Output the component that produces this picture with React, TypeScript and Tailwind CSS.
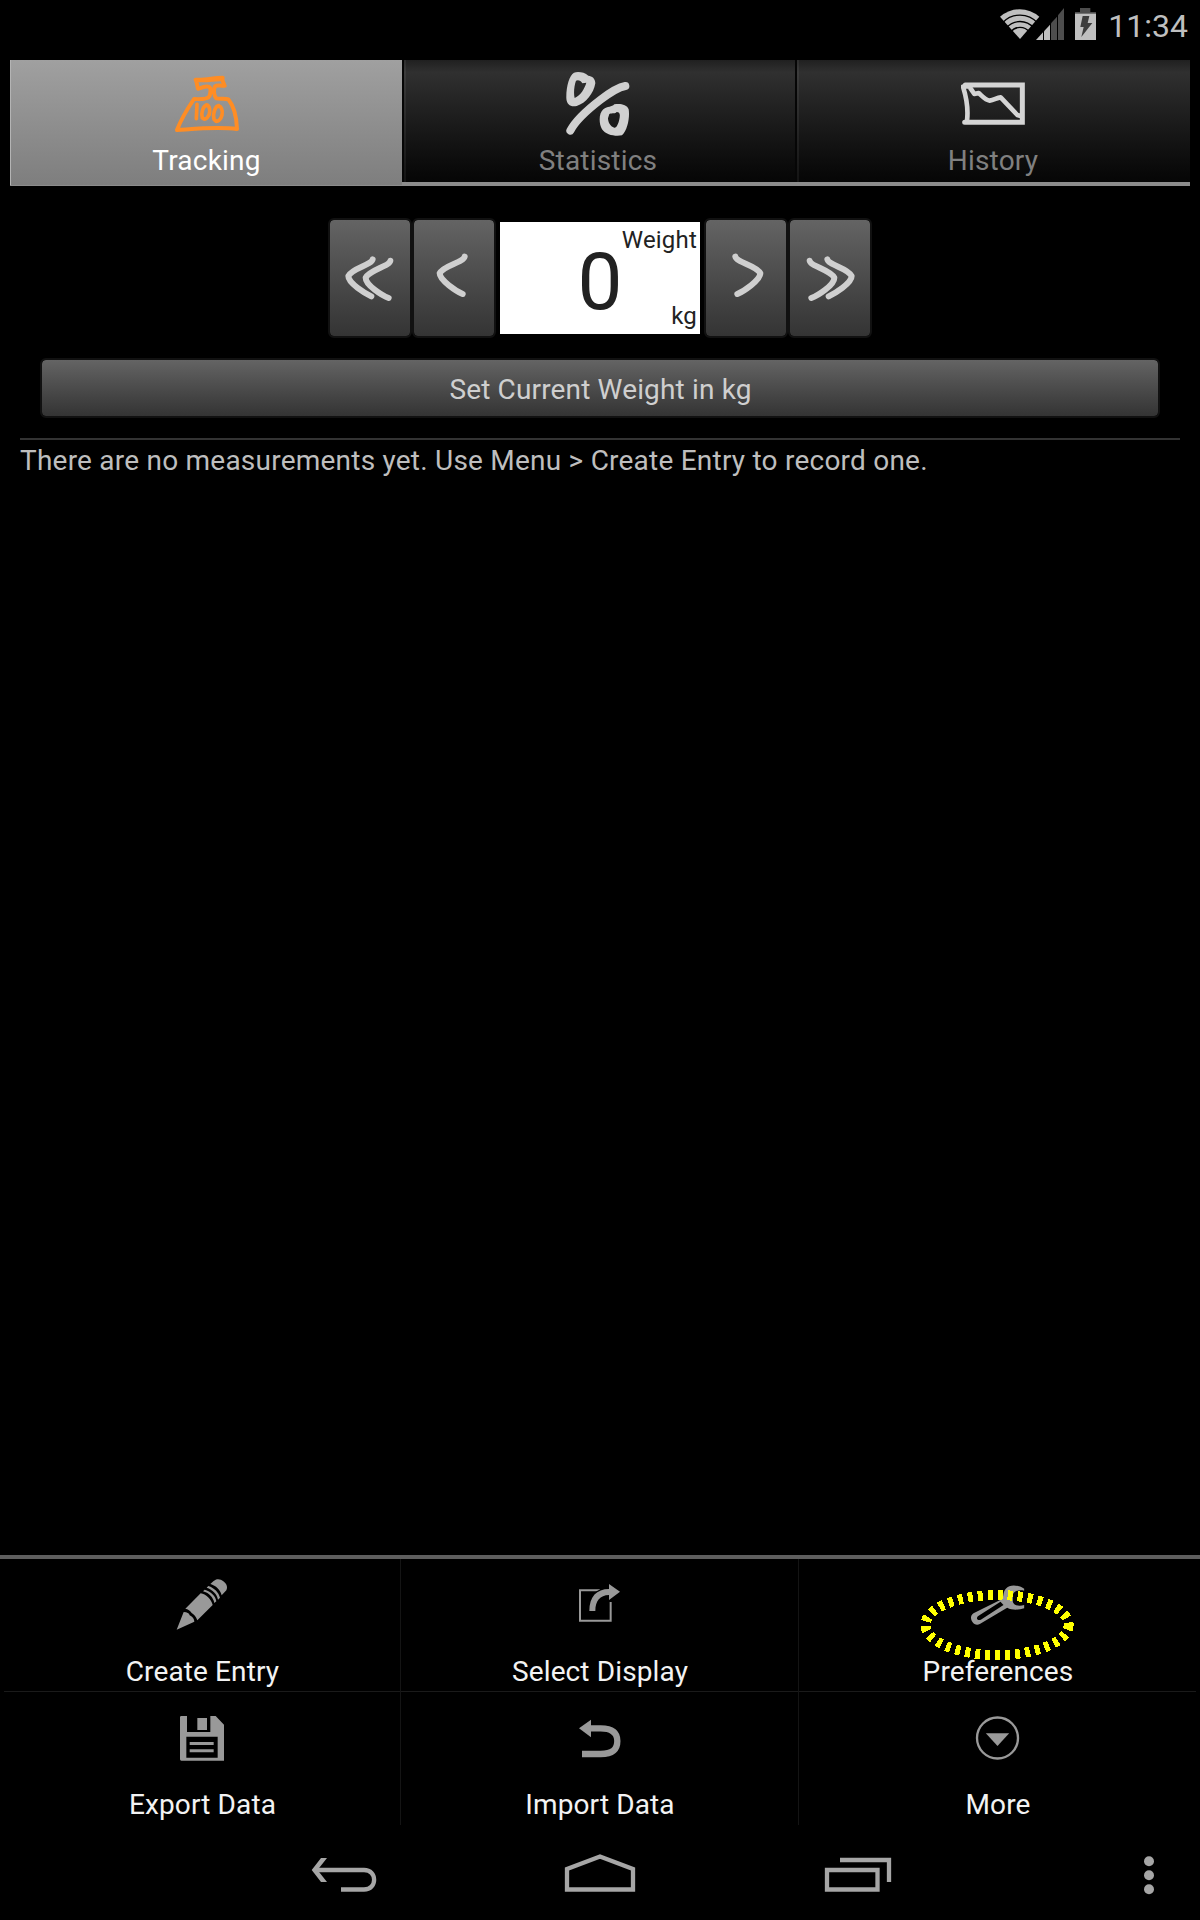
import React from "react";

function StatusIcons() {
  return (
    <svg className="h-[60px] w-[120px]" viewBox="60 0 360 180">
      <path d="M180 117 L120 50 A90 90 0 0 1 238 50 Z" fill="#bfbfbf" />
      <g fill="none" stroke="#000" strokeWidth="4">
        <path d="M127 69 A71 71 0 0 1 233 69" />
        <path d="M139 84 A53 53 0 0 1 221 84" />
        <path d="M152 96 A35 35 0 0 1 208 96" />
      </g>
      <g fill="#bfbfbf">
        <path d="M228 120 L249 97 V120 Z" />
        <path d="M252 94 L270 74 V120 H252 Z" />
      </g>
      <g fill="#4d4d4d">
        <path d="M273 70 L291 50 V120 H273 Z" />
        <path d="M294 46 L312 24 V120 H294 Z" />
      </g>
      <path d="M345 36 H360 V24 H391 V36 H408 V120 H345 Z" fill="#4d4d4d" />
      <path d="M345 41 H408 V120 H345 Z" fill="#bfbfbf" />
      <path d="M368 48 H388 L383 69 H397 L364 111 L371 81 H361 Z" fill="#3c3c3c" />
    </svg>
  );
}

function ScaleIcon() {
  return (
    <svg className="h-16 w-16 shrink-0" viewBox="522 66 192 192" fill="none" stroke="#ff8d24" strokeLinecap="round" strokeLinejoin="round">
      <path
        strokeWidth="12"
        d="M584 89 C608 92 640 83 665 83 L664 90 L671 107 C660 109 648 103 642 109 C637 120 638 136 646 145 C656 148 672 144 682 148 C697 167 707 203 708 237 C650 230 590 236 528 240 C536 219 558 178 579 147 C598 148 622 147 626 137 C630 121 630 112 622 110 C612 107 602 114 591 116 C588 106 588 97 584 89 Z"
      />
      <path d="M590 93 C615 97 640 90 660 91" strokeWidth="6" />
      <path strokeWidth="11" d="M588 163 L586 206 M618 166 C607 166 599 187 604 204 C614 213 625 199 626 186 C627 175 623 163 615 165 M653 167 C643 169 634 190 639 208 C649 221 660 209 663 195 C666 181 661 165 648 169" />
    </svg>
  );
}

function PercentIcon() {
  return (
    <svg className="h-16 w-16 shrink-0" viewBox="500 66 192 192" fill="#d0d0d0" fillRule="evenodd">
      <path fill="none" stroke="#d0d0d0" strokeLinecap="round" strokeWidth="24" d="M513 242 C528 213 566 178 604 149 C630 129 656 112 678 108" />
      <path d="M524 68 C510 75 500 110 501 145 C502 165 515 172 532 168 C560 160 583 130 588 100 C588 85 578 78 567 77 C555 66 535 64 524 68 Z M530 92 C536 88 545 92 549 100 L561 98 C556 115 545 135 526 144 C522 130 525 105 530 92 Z" />
      <path d="M645 163 C660 160 683 162 688 178 C692 200 685 240 668 256 C650 260 620 256 608 238 C598 220 598 190 612 178 C625 168 637 172 645 163 Z M630 192 C640 188 648 192 652 186 C664 186 662 198 660 208 C657 222 652 234 645 233 C632 230 626 215 626 205 Z" />
    </svg>
  );
}

function HistoryIcon() {
  return (
    <svg className="h-16 w-16 shrink-0" viewBox="543 66 192 192" fill="none" stroke="#d4d4d4" strokeWidth="15" strokeLinejoin="round" strokeLinecap="round">
      <path strokeLinejoin="miter" d="M556 105 H727 V217 H554" />
      <path strokeWidth="14" d="M549 110 C560 145 565 180 561 212 M553 108 L568 110 L583 132 L596 129 C607 139 617 151 629 152 C642 151 650 143 662 142 C681 162 698 180 712 195 L722 198" />
    </svg>
  );
}

function Tab({ label, className, children }: { label: string; className: string; children: React.ReactNode }) {
  return (
    <div className={className}>
      {children}
      <span className="mt-[5px] text-[28px] leading-[40px] whitespace-nowrap">{label}</span>
    </div>
  );
}

function StepButton({ kind }: { kind: "first" | "prev" | "next" | "last" }) {
  const flipped = kind === "next" || kind === "last";
  const double = kind === "first" || kind === "last";
  return (
    <button className="h-[120px] w-[84px] rounded-md border-2 border-[#111] bg-linear-to-b from-[#646464] to-[#343434] bg-clip-padding">
      <svg
        className={flipped ? "-m-0.5 h-[120px] w-[84px] -scale-x-100" : "-m-0.5 h-[120px] w-[84px]"}
        viewBox="0 0 252 360"
        fill="none"
        stroke="#cfcfcf"
        strokeWidth="18"
        strokeLinecap="round"
        strokeLinejoin="round"
      >
        {double ? (
          <>
            <path d="M134 124 C131 141 73 150 61 174 C61 196 112 226 130 235" />
            <path d="M187 128 C184 145 126 155 113 179 C113 202 164 233 182 240" />
          </>
        ) : (
          <path d="M158 116 C154 134 94 142 83 166 C83 187 134 220 152 228" />
        )}
      </svg>
    </button>
  );
}

const iconClass = "mt-2.5 h-[72px] w-[72px] shrink-0";

function PencilIcon() {
  return (
    <svg className={iconClass} viewBox="498 87 216 216" fill="#999">
      <path d="M530 269 L551 216 C562 217 567 219 569 226 C578 231 583 237 583 245 Z" />
      <path d="M556 206 L602 160 C617 162 635 179 638 195 L592 241 C588 230 582 223 575 219 C571 211 564 208 556 206 Z" />
      <path d="M609 154 L614 149 C632 154 647 168 649 184 L643 189 C640 172 626 158 609 154 Z" />
      <path d="M620 143 L625 138 C643 144 656 157 660 173 L654 179 C651 162 638 149 620 143 Z" />
      <path d="M631 132 L640 124 C650 114 662 117 670 124 C680 131 684 142 679 151 L665 166 C661 149 648 137 631 132 Z" />
    </svg>
  );
}

function SelectIcon() {
  return (
    <svg className={iconClass} viewBox="492 87 216 216">
      <path d="M600 151 H540 V242 H632 V186" fill="none" stroke="#999" strokeWidth="6" />
      <path d="M568 213 C568 170 590 147 627 147 V132 L660 155 L627 180 V165 C600 166 586 182 586 213 Z" fill="#999" stroke="#000" strokeWidth="8" paintOrder="stroke" />
    </svg>
  );
}

function WrenchIcon() {
  return (
    <svg className={iconClass} viewBox="484.5 87 216 216">
      <path
        fill="#999"
        fillRule="evenodd"
        d="M671 146 C652 134 628 132 616 146 C607 156 610 168 605 177 L519 220 C509 227 510 238 516 246 C521 254 530 256 538 252 L620 203 C635 211 655 210 671 205 V195 C655 200 640 196 637 186 V164 C640 153 655 149 671 152 Z M532 229 L600 185 L609 195 L541 239 C531 243 526 235 532 229 Z"
      />
    </svg>
  );
}

function SaveIcon() {
  return (
    <svg className={iconClass} viewBox="498 486 216 216" fill="#999">
      <path fillRule="evenodd" d="M544 528 H561 V576 H631 V528 H647 L672 554 V662 H544 Q540 662 540 658 V532 Q540 528 544 528 Z M559 590 V653 H653 V590 Z" />
      <path d="M592 534 H621 V570 H592 Z M569 606 H641 V615 H569 Z M569 628 H641 V637 H569 Z" />
    </svg>
  );
}

function ImportIcon() {
  return (
    <svg className={iconClass} viewBox="492 486 216 216">
      <path d="M573 565 H602 C634 565 652 577 652 603 C652 630 636 642 602 642 H546" fill="none" stroke="#999" strokeWidth="19" />
      <path d="M537 565 L573 539 V592 Z" fill="#999" />
    </svg>
  );
}

function MoreIcon() {
  return (
    <svg className={iconClass} viewBox="484.5 486 216 216">
      <circle cx="591" cy="594" r="61.5" fill="none" stroke="#999" strokeWidth="7" />
      <path d="M556 580 H626 L591 618 Z" fill="#999" />
    </svg>
  );
}

function MenuCell({ label, className, children }: { label: string; className: string; children: React.ReactNode }) {
  return (
    <div className={className}>
      {children}
      <span className="mt-[11px] pl-px text-[28px] leading-[40px] tracking-[0.12px] whitespace-nowrap text-[#f3f3f3]">{label}</span>
    </div>
  );
}

export default function App() {
  return (
    <div className="flex h-[1920px] w-[1200px] flex-col overflow-hidden bg-black font-['Roboto',sans-serif] tracking-[0.2px]">
      <header className="flex h-[60px] items-start justify-end pr-3">
        <StatusIcons />
        <span className="w-[88px] text-right text-[32px] leading-[52px] tracking-[0px] text-[#bfbfbf]">11:34</span>
      </header>

      <nav className="mx-2.5 flex h-[126px] border-b-4 border-[#8c8c8c]">
        <Tab
          label="Tracking"
          className="flex h-[125px] w-[392px] flex-col items-center border-l border-l-[#b4b4b4] bg-linear-to-b from-[#a0a0a0] to-[#7e7e7e] pt-3 text-white"
        >
          <ScaleIcon />
        </Tab>
        <Tab
          label="Statistics"
          className="flex h-[122px] w-[393px] flex-col items-center border-l-2 border-l-[#060606] bg-linear-to-b from-[#202020] via-[#303030] via-10% to-[#060606] pt-3 pr-[3px] text-[#808080] shadow-[inset_2px_0_0_rgba(255,255,255,0.06)]"
        >
          <PercentIcon />
        </Tab>
        <Tab
          label="History"
          className="flex h-[122px] w-[395px] flex-col items-center border-l-2 border-l-[#060606] bg-linear-to-b from-[#202020] via-[#303030] via-10% to-[#060606] pt-3 pr-px text-[#808080] shadow-[inset_2px_0_0_rgba(255,255,255,0.06)]"
        >
          <HistoryIcon />
        </Tab>
      </nav>

      <section className="mt-8 flex h-[120px] justify-center">
        <StepButton kind="first" />
        <StepButton kind="prev" />
        <div className="relative mx-1 mt-1 h-[112px] w-[200px] bg-white text-[#222]">
          <span className="absolute top-1 right-[3px] text-[24px] leading-[28px]">Weight</span>
          <span className="block pt-px text-center text-[80px] leading-[118px]">0</span>
          <span className="absolute right-[3px] bottom-1 text-[24px] leading-[28px]">kg</span>
        </div>
        <StepButton kind="next" />
        <StepButton kind="last" />
      </section>

      <button className="mx-10 mt-5 h-[60px] shrink-0 rounded-md border-2 border-[#111] bg-linear-to-b from-[#646464] to-[#343434] bg-clip-padding pt-0.5 pl-px text-[28px] leading-[54px] tracking-[0.15px] text-[#cfcfcf]">
        <span className="relative top-px">Set Current Weight in kg</span>
      </button>

      <main className="mx-5 mt-5 flex-1 border-t-2 border-[#333]">
        <p className="pt-px text-[28px] leading-[40px] tracking-[0.225px] whitespace-nowrap text-[#bebebe]">
          There are no measurements yet. Use Menu &gt; Create Entry to record one.
        </p>
      </main>

      <section className="h-[269px] shrink-0 border-t-4 border-[#5e5e5e] px-1">
        <div className="grid h-[133px] grid-cols-[397px_398px_397px] border-b border-[#1a1a1a]">
          <MenuCell label="Create Entry" className="flex flex-col items-center border-r border-[#141414]">
            <PencilIcon />
          </MenuCell>
          <MenuCell label="Select Display" className="flex flex-col items-center border-r border-[#141414]">
            <SelectIcon />
          </MenuCell>
          <MenuCell label="Preferences" className="relative flex flex-col items-center">
            <WrenchIcon />
            <svg className="absolute top-[21px] left-[112px] h-[90px] w-[172px]" viewBox="334 120 516 270">
              <path
                d="M807 255 A215 90 0 0 1 377 255 A215 90 0 0 1 807 255"
                fill="none"
                stroke="#ffff00"
                strokeWidth="30"
                strokeDasharray="15 15"
                shapeRendering="crispEdges"
              />
            </svg>
          </MenuCell>
        </div>
        <div className="grid h-[132px] grid-cols-[397px_398px_397px]">
          <MenuCell label="Export Data" className="flex flex-col items-center border-r border-[#141414]">
            <SaveIcon />
          </MenuCell>
          <MenuCell label="Import Data" className="flex flex-col items-center border-r border-[#141414]">
            <ImportIcon />
          </MenuCell>
          <MenuCell label="More" className="flex flex-col items-center">
            <MoreIcon />
          </MenuCell>
        </div>
      </section>

      <footer className="flex h-24 shrink-0 pl-[216px]">
        <svg className="h-24 w-64" viewBox="216 1824 256 96" fill="none" stroke="#a6a6a6" strokeWidth="4.3">
          <path d="M316 1870 H364 C377.500 1870 377.500 1889.500 364 1889.500 H341" />
          <path d="M321 1858 H327 L317.500 1870 L327 1882 H321 L311.700 1870 Z" fill="#a6a6a6" stroke="none" />
        </svg>
        <svg className="h-24 w-64" viewBox="472 1824 256 96" fill="none" stroke="#a6a6a6" strokeWidth="4.3">
          <path d="M567 1889.500 V1869 L600 1856.500 L633 1869 V1889.500 Z" />
        </svg>
        <svg className="h-24 w-64" viewBox="728 1824 256 96" fill="none" stroke="#a6a6a6" strokeWidth="4.3">
          <path d="M827 1870 H877.500 V1889.500 H827 Z M840 1860 H889 V1882" />
        </svg>
        <svg className="ml-[114px] h-24 w-[102px]" viewBox="1098 1824 102 96" fill="#a6a6a6">
          <circle cx="1149" cy="1861.300" r="5" />
          <circle cx="1149" cy="1875.300" r="5" />
          <circle cx="1149" cy="1889.300" r="5" />
        </svg>
      </footer>
    </div>
  );
}
